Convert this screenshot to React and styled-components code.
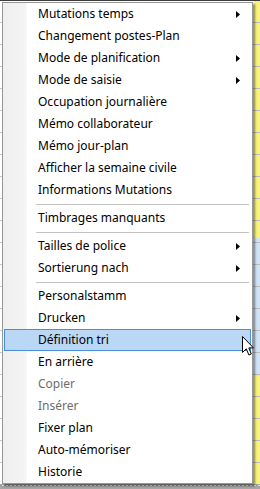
import React from 'react';
import styled, { createGlobalStyle } from 'styled-components';

const Global = createGlobalStyle`
  html, body { margin: 0; padding: 0; width: 260px; height: 489px; overflow: hidden; background: #fff; }
  #root { width: 260px; height: 489px; }
`;

const Screen = styled.div`
  position: relative;
  width: 260px;
  height: 489px;
  overflow: hidden;
  display: grid;
  grid-template-columns: 1fr 6px;
  grid-template-rows: 1px 1fr 5px;
`;

const TopEdge = styled.div`
  grid-column: 1 / -1;
  background: #3c3c3c;
`;

const GridArea = styled.div`
  background:
    repeating-linear-gradient(to bottom, transparent 0 21px, #c9c9c9 21px 22px),
    #ffffff;
`;

const YellowColumn = styled.div`
  background:
    repeating-linear-gradient(to bottom, transparent 0 21px, #b9b9b9 21px 22px),
    linear-gradient(to bottom, #f7f17e 0 237px, #cfe2f6 237px 375px, #f7f17e 375px);
`;

const BottomEdge = styled.div`
  grid-column: 1 / -1;
  background:
    repeating-linear-gradient(to right, #9b9b9b 0 2px, #e6e6e6 2px 4px) 0 1px / 100% 1px no-repeat,
    #a6a6a6;
`;

const Menu = styled.ul`
  position: absolute;
  left: 2px;
  top: 2px;
  width: 251px;
  box-sizing: border-box;
  margin: 0;
  padding: 0 1px;
  list-style: none;
  border: 1px solid #979797;
  background: linear-gradient(to right, #efefef 0, #f4f4f4 23px, #ffffff 24px);
  box-shadow: 2px 2px 2px rgba(0, 0, 0, 0.45);
  font-family: "Noto Sans", "Open Sans", sans-serif;
  font-size: 12px;
`;

const Item = styled.li`
  position: relative;
  box-sizing: border-box;
  height: 22px;
  display: flex;
  align-items: center;
  justify-content: space-between;
  padding: 0 10px 0 33px;
  color: ${(p) => (p.$disabled ? '#6d6d6d' : '#000')};
  border: 1px solid ${(p) => (p.$active ? '#4a8fdc' : 'transparent')};
  background: ${(p) => (p.$active ? '#bad8f5' : 'transparent')};
  white-space: nowrap;
`;

const Label = styled.span`
  line-height: 20px;
`;

const Separator = styled.li`
  height: 6px;
  display: flex;
  align-items: center;
  padding-left: 32px;
  padding-right: 2px;
  &::after {
    content: '';
    flex: 1;
    height: 1px;
    background: #c3c3c3;
  }
`;

const Cursor = styled.svg`
  position: absolute;
  left: 242px;
  top: 336px;
`;

const SubArrow = () => (
  <svg width="4" height="7" viewBox="0 0 4 7">
    <polygon points="0,0 4,3.5 0,7" fill="#000" />
  </svg>
);

const groups = [
  [
    { t: 'Mutations temps', sub: true },
    { t: 'Changement postes-Plan' },
    { t: 'Mode de planification', sub: true },
    { t: 'Mode de saisie', sub: true },
    { t: 'Occupation journalière' },
    { t: 'Mémo collaborateur' },
    { t: 'Mémo jour-plan' },
    { t: 'Afficher la semaine civile' },
    { t: 'Informations Mutations' },
  ],
  [{ t: 'Timbrages manquants' }],
  [
    { t: 'Tailles de police', sub: true },
    { t: 'Sortierung nach', sub: true },
  ],
  [
    { t: 'Personalstamm' },
    { t: 'Drucken', sub: true },
    { t: 'Définition tri', active: true },
    { t: 'En arrière' },
    { t: 'Copier', disabled: true },
    { t: 'Insérer', disabled: true },
    { t: 'Fixer plan' },
    { t: 'Auto-mémoriser' },
    { t: 'Historie' },
  ],
];

export default function App() {
  return (
    <>
      <Global />
      <Screen>
        <TopEdge />
        <GridArea />
        <YellowColumn />
        <BottomEdge />
        <Menu>
          {groups.map((g, gi) => (
            <React.Fragment key={gi}>
              {gi > 0 && <Separator />}
              {g.map((it) => (
                <Item key={it.t} $active={it.active} $disabled={it.disabled}>
                  <Label>{it.t}</Label>
                  {it.sub && <SubArrow />}
                </Item>
              ))}
            </React.Fragment>
          ))}
        </Menu>
        <Cursor width="13" height="21" viewBox="0 0 13 21">
          <path
            d="M0.5 0.5 L0.5 16.5 L4.3 12.8 L6.9 19 L9.3 18 L6.8 11.9 L11.5 11.9 Z"
            fill="#fff"
            stroke="#000"
            strokeWidth="1"
            strokeLinejoin="miter"
          />
        </Cursor>
      </Screen>
    </>
  );
}
